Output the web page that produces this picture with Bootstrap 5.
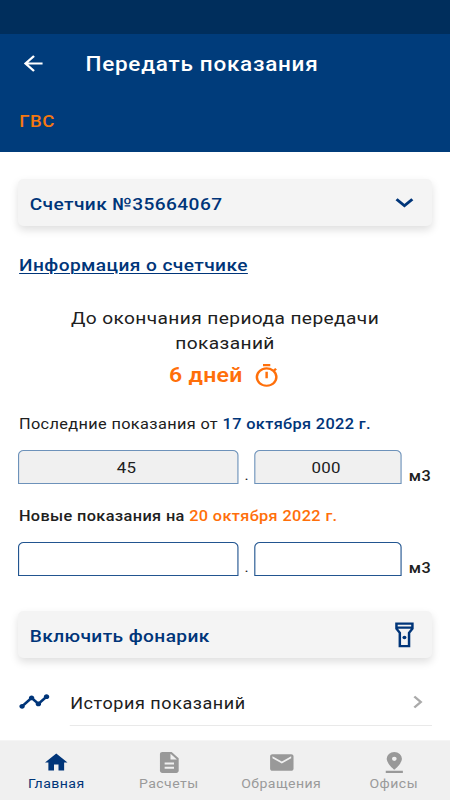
<!DOCTYPE html>
<html lang="ru">
<head>
<meta charset="utf-8">
<meta name="viewport" content="width=device-width, initial-scale=1">
<title>Передать показания</title>
<link href="https://cdn.jsdelivr.net/npm/bootstrap@5.3.0/dist/css/bootstrap.min.css" rel="stylesheet">
<style>
  :root { --navy: #003c7b; --ink: #003579; --orange: #ff6f0a; }
  body { margin: 0; overflow: hidden; background: #fff; font-family: Roboto, "Noto Sans", sans-serif; }
  .screen { width: 400px; height: 800px; transform: scaleX(1.125); transform-origin: 0 0; color: #202020; font-size: 17px; line-height: 25px; letter-spacing: .36px; }
  svg { display: block; flex: none; }
  .medium { font-weight: 500; }
  .statusbar { height: 33.5px; background: #002e5c; }
  .topbar { height: 118.5px; background: var(--navy); }
  .topbar-row { height: 59px; padding-left: 17px; }
  .screen-title { font-size: 20px; font-weight: 500; margin: 1px 0 0 34px; letter-spacing: .65px; line-height: 26px; }
  .service-tab { color: #f5780f; font-size: 16.5px; padding: 16px 17px 0; letter-spacing: .5px; }
  .content-area { height: 588px; padding: 27px 16.4px 0; }
  .action-tile { height: 47px; border-radius: 5px; background: #f4f4f4; color: var(--ink); padding: 3px 15.500px 0 10px; box-shadow: 0 4px 8px rgba(0,0,0,.13); }
  .meter-link { color: var(--ink); text-decoration: underline; text-decoration-thickness: 1px; text-underline-offset: 2px; }
  .meter-info { height: 25px; margin-top: 27px; padding-left: .6px; }
  .deadline { margin-top: 27px; padding-top: 1px; }
  .days-left { color: var(--orange); font-size: 20.5px; font-weight: 600; height: 37px; letter-spacing: .3px; padding-top: 2px; }
  .reading-label { font-size: 14.5px; height: 25px; letter-spacing: .32px; padding-left: .4px; }
  .label-last { margin-top: 19px; }
  .label-new { margin-top: 20px; }
  .navy-text { color: var(--ink); } .orange-text { color: var(--orange); }
  .reading-row { height: 34px; margin-top: 13px; }
  .reading-box { height: 34px; border: 1px solid #225590; border-radius: 5px 5px 0 0; font-size: 15px; letter-spacing: .2px; padding: 2px 4px 0 0; }
  .box-old { background: #f0f0f0; border-color: #6d92ba; }
  .box-int { width: 196px; } .box-frac { width: 131px; }
  .point { width: 14px; font-size: 14px; line-height: 18px; }
  .unit { font-size: 14.5px; line-height: 15px; margin-left: 6px; }
  .torch-tile { margin-top: 35px; }
  .history-row { height: 45px; margin-top: 22.5px; }
  .trend-icon { margin-top: -3px; }
  .history-text { margin-left: 17px; border-bottom: 1px solid #e9e9e9; height: 45px; padding: 1px 8px 0 0; font-size: 16px; letter-spacing: .5px; }
  .tabs { height: 60px; background: #f0f0f0; border-top: 1px solid #f5f5f5; font-size: 12.5px; letter-spacing: .4px; line-height: 18px; color: #9a9a9a; padding-top: 9px; }
</style>
</head>
<body>
<div class="screen">
  <div class="statusbar"></div>
  <header class="topbar text-white">
    <div class="topbar-row d-flex align-items-center">
      <svg width="25" height="25" viewBox="0 0 24 24"><path fill="#fff" d="M20 11H7.830l5.590-5.590L12 4l-8 8 8 8 1.410-1.410L7.830 13H20z"/></svg>
      <h1 class="screen-title">Передать показания</h1>
    </div>
    <div class="service-tab medium"><span>ГВС</span></div>
  </header>

  <main class="content-area">
    <div class="action-tile medium d-flex align-items-center justify-content-between">
      <span>Счетчик №35664067</span>
      <svg width="17" height="13" viewBox="0 0 17 13"><path fill="none" stroke="#003579" stroke-width="2.600" d="M1.500 1.200l7 6.600 7-6.600"/></svg>
    </div>
    <div class="meter-info"><a class="meter-link medium" href="#">Информация о счетчике</a></div>

    <div class="deadline text-center"><span>До окончания периода передачи</span><br><span>показаний</span></div>
    <div class="days-left d-flex align-items-center justify-content-center">
      <span>6 дней</span>
      <svg class="ms-2" width="26" height="26" viewBox="0 0 24 24"><path fill="#ff6f0a" d="M15 1H9v2h6zm-4 13h2V8h-2zm8.030-6.610l1.420-1.420c-.43-.51-.9-.99-1.410-1.410l-1.420 1.420A8.960 8.960 0 0 0 12 4a9 9 0 1 0 7.030 3.390zM12 20a7 7 0 1 1 0-14 7 7 0 0 1 0 14z"/></svg>
    </div>

    <div class="reading-label label-last"><span>Последние показания от <span class="navy-text medium">17 октября 2022 г.</span></span></div>
    <div class="reading-row d-flex align-items-end">
      <div class="reading-box box-old box-int d-flex align-items-center justify-content-center">45</div>
      <div class="point text-center">.</div>
      <div class="reading-box box-old box-frac d-flex align-items-center justify-content-center">000</div>
      <div class="unit medium">м3</div>
    </div>
    <div class="reading-label label-new medium"><span>Новые показания на <span class="orange-text">20 октября 2022 г.</span></span></div>
    <div class="reading-row d-flex align-items-end">
      <div class="reading-box box-int"></div>
      <div class="point text-center">.</div>
      <div class="reading-box box-frac"></div>
      <div class="unit medium">м3</div>
    </div>

    <div class="action-tile torch-tile medium d-flex align-items-center justify-content-between">
      <span>Включить фонарик</span>
      <svg width="17" height="28" viewBox="0 0 17 28"><path fill="none" stroke="#003579" stroke-width="2.200" d="M1.400 1.600h14.200v5l-3 4.300v13.200H4.400V10.900L1.400 6.600zM1.400 5.700h14.200"/><circle cx="8.500" cy="15.500" r="1.800" fill="#003579"/></svg>
    </div>

    <div class="history-row d-flex align-items-center">
      <svg class="trend-icon" width="29" height="29" viewBox="0 0 24 24"><path fill="#003579" d="M23 8c0 1.100-.9 2-2 2-.18 0-.35-.02-.51-.07l-3.560 3.550c.05.16.07.34.07.52 0 1.100-.9 2-2 2s-2-.9-2-2c0-.18.02-.36.07-.52l-2.550-2.550c-.16.05-.34.07-.52.07s-.36-.02-.52-.07l-4.550 4.560c.05.16.07.33.07.51 0 1.100-.9 2-2 2s-2-.9-2-2 .9-2 2-2c.18 0 .35.02.51.07l4.560-4.550C8.020 9.360 8 9.180 8 9c0-1.100.9-2 2-2s2 .9 2 2c0 .18-.02.36-.07.52l2.550 2.550c.16-.05.34-.07.52-.07s.36.02.52.07l3.550-3.560C19.020 8.350 19 8.180 19 8c0-1.100.9-2 2-2s2 .9 2 2z"/></svg>
      <div class="history-text flex-grow-1 d-flex align-items-center justify-content-between">
        <span>История показаний</span>
        <svg width="9" height="17" viewBox="0 0 9 17"><path fill="none" stroke="#aaa" stroke-width="2.200" d="M1.300 1.500l5.700 5.500-5.700 5.500"/></svg>
      </div>
    </div>
  </main>

  <nav class="tabs row g-0 text-center">
    <div class="col-3 d-flex flex-column align-items-center navy-text"><svg width="24" height="25" viewBox="0 0 24 24"><path fill="#003579" d="M10 20v-6h4v6h5v-8h3L12 3 2 12h3v8z"/></svg><span>Главная</span></div>
    <div class="col-3 d-flex flex-column align-items-center"><svg width="25" height="25" viewBox="0 0 24 24"><path fill="#999" d="M14 2H6c-1.100 0-2 .9-2 2v16c0 1.100.9 2 2 2h12c1.100 0 2-.9 2-2V8zm2 16H8v-2h8zm0-4H8v-2h8zm-3-5V3.500L18.500 9z"/></svg><span>Расчеты</span></div>
    <div class="col-3 d-flex flex-column align-items-center"><svg width="25" height="25" viewBox="0 0 24 24"><path fill="#999" d="M20 4H4c-1.100 0-2 .9-2 2v12c0 1.100.9 2 2 2h16c1.100 0 2-.9 2-2V6c0-1.100-.9-2-2-2zm0 4l-8 5-8-5V6l8 5 8-5z"/></svg><span>Обращения</span></div>
    <div class="col-3 d-flex flex-column align-items-center"><svg width="25" height="25" viewBox="0 0 24 24"><path fill="#999" d="M18.500 8.500A6.500 6.500 0 0 0 5.500 8.500c0 4.600 6.500 10.500 6.500 10.500S18.500 13.100 18.500 8.500zM10 8.500a2 2 0 1 1 4 0 2 2 0 0 1-4 0zM4.700 20v2h14.600v-2z"/></svg><span>Офисы</span></div>
  </nav>
</div>
<script src="https://cdn.jsdelivr.net/npm/bootstrap@5.3.0/dist/js/bootstrap.bundle.min.js"></script>
</body>
</html>
